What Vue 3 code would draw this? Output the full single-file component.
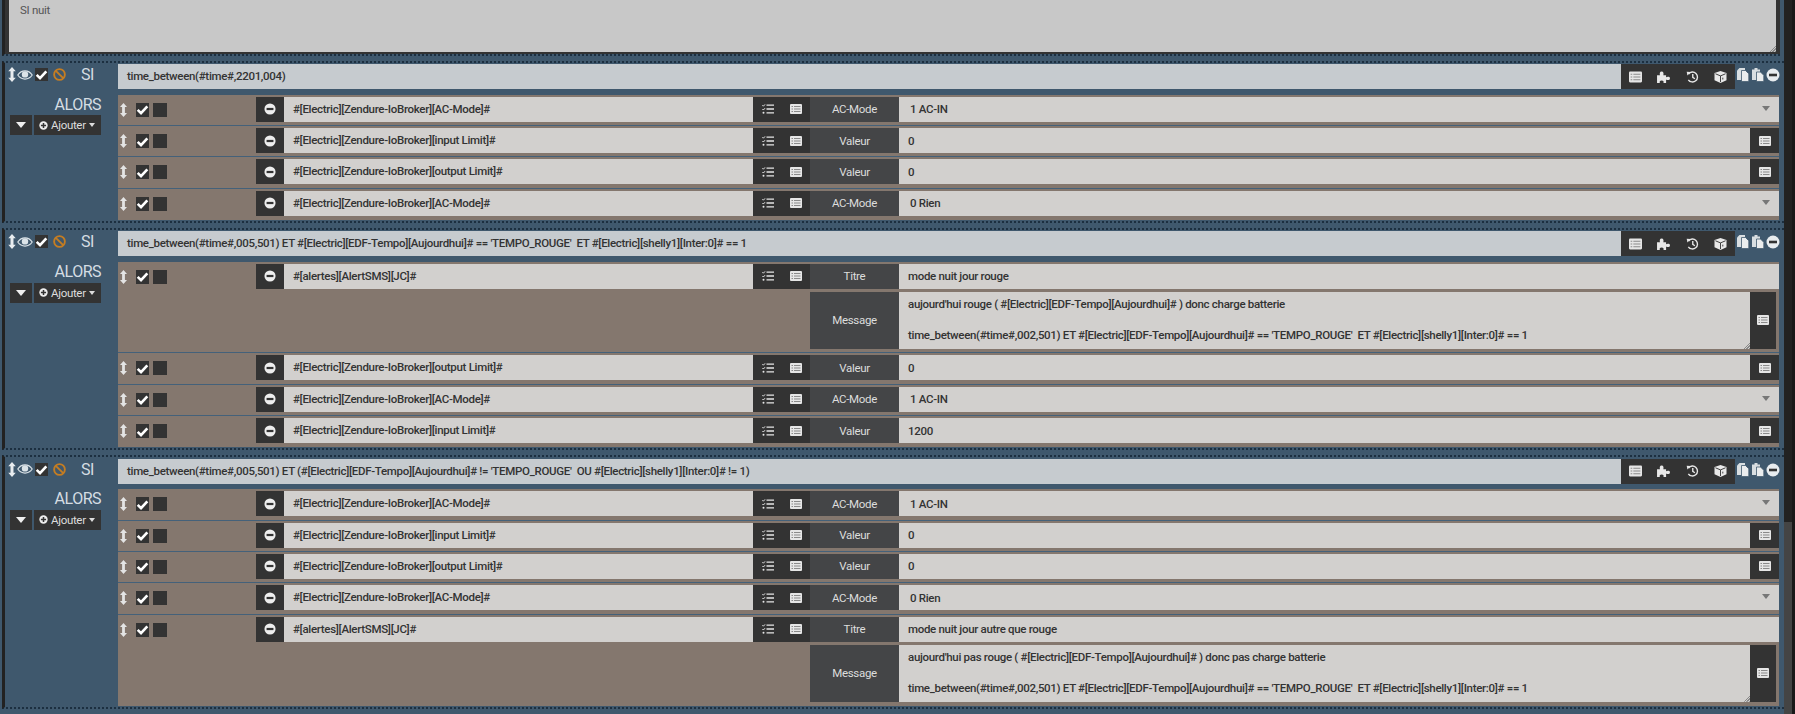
<script setup>
const L2 = "time_between(#time#,002,501) ET #[Electric][EDF-Tempo][Aujourdhui]# == 'TEMPO_ROUGE'  ET #[Electric][shelly1][Inter:0]# == 1"
const Z = '#[Electric][Zendure-IoBroker]'
const sel = (f, value) => ({ field: f, label: 'AC-Mode', value, kind: 'select' })
const val = (f, value) => ({ field: f, label: 'Valeur', value, kind: 'input' })
const sms = (value, first) => ({
  field: '#[alertes][AlertSMS][JC]#',
  label: 'Titre',
  value,
  kind: 'title',
  message: `${first}\n\n${L2}`
})
const blocks = [
  {
    cond: 'time_between(#time#,2201,004)',
    rows: [
      sel(Z + '[AC-Mode]#', '1 AC-IN'),
      val(Z + '[input Limit]#', '0'),
      val(Z + '[output Limit]#', '0'),
      sel(Z + '[AC-Mode]#', '0 Rien')
    ]
  },
  {
    cond: "time_between(#time#,005,501) ET #[Electric][EDF-Tempo][Aujourdhui]# == 'TEMPO_ROUGE'  ET #[Electric][shelly1][Inter:0]# == 1",
    rows: [
      sms('mode nuit jour rouge', "aujourd'hui rouge ( #[Electric][EDF-Tempo][Aujourdhui]# ) donc charge batterie"),
      val(Z + '[output Limit]#', '0'),
      sel(Z + '[AC-Mode]#', '1 AC-IN'),
      val(Z + '[input Limit]#', '1200')
    ]
  },
  {
    cond: "time_between(#time#,005,501) ET (#[Electric][EDF-Tempo][Aujourdhui]# != 'TEMPO_ROUGE'  OU #[Electric][shelly1][Inter:0]# != 1)",
    rows: [
      sel(Z + '[AC-Mode]#', '1 AC-IN'),
      val(Z + '[input Limit]#', '0'),
      val(Z + '[output Limit]#', '0'),
      sel(Z + '[AC-Mode]#', '0 Rien'),
      sms('mode nuit jour autre que rouge', "aujourd'hui pas rouge ( #[Electric][EDF-Tempo][Aujourdhui]# ) donc pas charge batterie")
    ]
  }
]
const addons = ['i-list', 'i-puzzle', 'i-history', 'i-cube']
</script>

<template>
  <div class="page">
    <svg class="defs" aria-hidden="true">
      <symbol id="i-arrows" viewBox="0 0 8 16"><path fill="currentColor" d="M4 0 8 4.500H5.600v7H8L4 16 0 11.500h2.400v-7H0Z" /></symbol>
      <symbol id="i-check" viewBox="0 0 14 14"><path fill="none" stroke="currentColor" stroke-width="2.800" d="M1.800 7.400 5.400 11 12.200 3.600" /></symbol>
      <symbol id="i-eye" viewBox="0 0 16 12"><path fill="none" stroke="currentColor" stroke-width="1.200" d="M.8 6C4.500.6 11.500.6 15.200 6 11.500 11.400 4.500 11.400.8 6Z" /><circle cx="8" cy="5.400" r="3.200" fill="currentColor" /></symbol>
      <symbol id="i-ban" viewBox="0 0 14 14"><circle cx="7" cy="7" r="5.800" fill="none" stroke="currentColor" stroke-width="2" /><path stroke="currentColor" stroke-width="2" d="M3 3l8 8" /></symbol>
      <symbol id="i-minus" viewBox="0 0 14 14"><circle cx="7" cy="7" r="6.500" fill="currentColor" /><rect x="3" y="5.700" width="8" height="2.600" fill="#333" /></symbol>
      <symbol id="i-plus" viewBox="0 0 14 14"><circle cx="7" cy="7" r="6.500" fill="currentColor" /><path stroke="#333" stroke-width="2.400" d="M3 7h8M7 3v8" /></symbol>
      <symbol id="i-list" viewBox="0 0 12 10"><rect width="12" height="10" rx="1" fill="#e6e6e6" /><path stroke="#8a8a8a" d="M1.500 2.500h1.500M4 2.500h6.500M1.500 5h1.500M4 5h6.500M1.500 7.500h1.500M4 7.500h6.500" /></symbol>
      <symbol id="i-tasks" viewBox="0 0 12 10"><path stroke="currentColor" stroke-width="1.300" d="M4.500 1.200H12M4.500 5H12M4.500 8.800H12" /><path fill="none" stroke="currentColor" d="M.4 1.200l1 1L3 .4M.4 5l1 1L3 4.200" /><circle cx="1.500" cy="8.800" r="1" fill="currentColor" /></symbol>
      <symbol id="i-puzzle" viewBox="0 0 14 13"><path fill="currentColor" d="M0 4.500h3.200C2.600 3 3 .6 5 .6S7.400 3 6.800 4.500H9.800v2.400c1.200-.9 4.200-.9 4.200 1.100s-3 2-4.200 1.100V13H6.900c.6-1 .2-2.600-1.900-2.600S2.500 12 3.100 13H0Z" /></symbol>
      <symbol id="i-history" viewBox="0 0 13 13"><path fill="none" stroke="currentColor" stroke-width="1.500" d="M2.200 3.200A5.400 5.400 0 1 1 2 9.500" /><path fill="currentColor" d="M.2.800 4.700 1 1 5Z" /><path fill="none" stroke="currentColor" stroke-width="1.500" d="M6.800 3.200V7l2.300 1.400" /></symbol>
      <symbol id="i-cube" viewBox="0 0 13 13"><path fill="currentColor" d="M6.500 0 13 2.300v7.800L6.500 13 0 10.100V2.300Z" /><path fill="none" stroke="#333" stroke-width="1" d="M1 3 6.500 5.300 12 3M6.500 5.300V12M9 7.200v2" /></symbol>
      <symbol id="i-copy" viewBox="0 0 12 14"><path fill="#d9dee1" d="M2.500 0H8v12H0V2.500Z" /><path fill="#ebedee" stroke="#3f586d" stroke-width=".8" d="M4.500 2.500h4L11.800 5.800V13.600H4.500Z" /></symbol>
      <symbol id="i-paste" viewBox="0 0 12 14"><path fill="#d9dee1" d="M0 1.500h2.500V0h3v1.500H8V12H0Z" /><path fill="#ebedee" stroke="#3f586d" stroke-width=".8" d="M4.500 4h4L11.800 7.300V13.600H4.500Z" /></symbol>
    </svg>

    <main class="content">
      <section class="note">
        <div class="note-area">SI nuit<span class="grip"></span></div>
      </section>

      <section v-for="(block, i) in blocks" :key="i" class="block">
        <header class="head">
          <div class="head-tools">
            <svg class="ico arrows"><use href="#i-arrows" /></svg>
            <svg class="ico eye"><use href="#i-eye" /></svg>
            <span class="box"><svg class="ico tick"><use href="#i-check" /></svg></span>
            <svg class="ico ban"><use href="#i-ban" /></svg>
            <span class="si">SI</span>
          </div>
          <div class="cond">{{ block.cond }}</div>
          <div class="addons">
            <span v-for="a in addons" :key="a" class="addon"><svg class="ico addon-ico"><use :href="'#' + a" /></svg></span>
          </div>
          <div class="copy-tools">
            <svg class="ico copy"><use href="#i-copy" /></svg>
            <svg class="ico copy"><use href="#i-paste" /></svg>
            <svg class="ico remove"><use href="#i-minus" /></svg>
          </div>
        </header>

        <div class="then">
          <div class="then-side">
            <div class="alors">ALORS</div>
            <div class="side-btns">
              <span class="btn btn-caret"><i class="caret caret-big"></i></span>
              <span class="btn btn-add">
                <svg class="ico plus"><use href="#i-plus" /></svg>Ajouter<i class="caret"></i>
              </span>
            </div>
          </div>

          <div class="actions">
            <div v-for="(row, j) in block.rows" :key="j" class="row" :class="{ tall: row.message }">
              <div class="line">
                <div class="row-tools">
                  <svg class="ico row-arrows"><use href="#i-arrows" /></svg>
                  <span class="box row-box"><svg class="ico tick"><use href="#i-check" /></svg></span>
                  <span class="box row-box blank"></span>
                </div>
                <span class="dark-btn minus-btn"><svg class="ico minus"><use href="#i-minus" /></svg></span>
                <div class="field">{{ row.field }}</div>
                <span class="dark-btn icon-pair">
                  <svg class="ico small"><use href="#i-tasks" /></svg>
                  <svg class="ico small"><use href="#i-list" /></svg>
                </span>
                <div class="label">{{ row.label }}</div>
                <div class="value" :class="row.kind">
                  <span>{{ row.value }}</span>
                  <i v-if="row.kind === 'select'" class="select-caret"></i>
                </div>
                <span v-if="row.kind === 'input'" class="dark-btn end-btn"><svg class="ico small"><use href="#i-list" /></svg></span>
              </div>
              <div v-if="row.message" class="message">
                <div class="label">Message</div>
                <div class="msg-text">{{ row.message }}<span class="grip"></span></div>
                <span class="dark-btn end-btn msg-btn"><svg class="ico small"><use href="#i-list" /></svg></span>
              </div>
            </div>
          </div>
        </div>
      </section>
    </main>

    <aside class="scroll">
      <div class="track"></div>
      <div class="thumb"></div>
    </aside>
  </div>
</template>

<style>
html, body { margin: 0; background: #1e1e1e; overflow: hidden; }
</style>

<style scoped>
.page {
  display: flex;
  width: 1795px;
  height: 714px;
  overflow: hidden;
  background: #1a1a1a;
  font-family: Roboto, "Liberation Sans", sans-serif;
  font-size: 11.5px;
  letter-spacing: -0.31px;
  color: #333;
}
.defs { position: absolute; width: 0; height: 0; }
.ico { display: block; flex: none; }

.content {
  width: 1784px;
  flex: none;
  background: #3f586d;
  overflow: hidden;
}
.scroll {
  flex: 1;
  display: flex;
  flex-direction: column;
  border-right: 3px solid #191919;
}
.track { height: 522px; background: #222; }
.thumb { flex: 1; background: #444; }

.note {
  margin: 0 4px 4.5px 2px;
  border-left: 3px solid #222;
  border-bottom: 2px dotted #1c2f40;
}
.note-area {
  position: relative;
  height: 34px;
  padding: 3px 11px 15px;
  line-height: 15px;
  background: #c8c8c8;
  border-left: 4px solid #333;
  border-right: 4px solid #333;
  border-bottom: 2px solid #333;
  color: #555;
}
.grip {
  position: absolute;
  right: 0;
  bottom: 0;
  width: 7px;
  height: 7px;
  background: repeating-linear-gradient(135deg, transparent 0 1px, #888 1px 2px);
  clip-path: polygon(100% 0, 100% 100%, 0 100%);
}

.block {
  margin: 0 0 4.9px 2px;
  padding: 1.6px 0 0.6px;
  border-left: 3px solid #222;
  border-top: 2px dotted #1c2f40;
  border-bottom: 2px dotted #1c2f40;
}
.block:last-child { margin-bottom: 0; }

.head { display: flex; align-items: flex-start; height: 30.6px; }
.head-tools {
  width: 113px;
  flex: none;
  height: 25px;
  display: flex;
  align-items: center;
  padding-bottom: 4px;
  box-sizing: border-box;
}
.arrows { width: 8px; height: 15px; margin-left: 3px; color: #e8ecef; }
.eye { width: 16px; height: 12px; margin-left: 1px; color: #dbe3e8; }
.box {
  display: flex;
  align-items: center;
  justify-content: center;
  width: 13px;
  height: 13px;
  margin-left: 2px;
  background: #333;
}
.tick { width: 13px; height: 13px; color: #fff; }
.ban { width: 13px; height: 13px; margin-left: 5px; color: #c57d22; }
.si { margin-left: 15px; font-size: 16px; letter-spacing: -0.5px; color: #d5dde3; }

.cond {
  width: 1503px;
  flex: none;
  height: 25px;
  box-sizing: border-box;
  padding-left: 9px;
  line-height: 25px;
  background: #c6cbcf;
  font-weight: 500;
  white-space: pre;
}
.addons { display: flex; width: 114px; height: 25px; flex: none; background: #333; }
.addon { flex: 1; display: flex; align-items: center; justify-content: center; }
.addon-ico { width: 13px; height: 12px; color: #e8e8e8; }
.copy-tools { display: flex; align-items: center; height: 25px; padding-bottom: 3px; box-sizing: border-box; margin-left: 2px; }
.copy { width: 12px; height: 14px; margin-right: 3px; }
.copy + .copy { margin-right: 2px; }
.remove { width: 14px; height: 14px; color: #e8ecef; }

.then { display: flex; align-items: flex-start; }
.then-side { width: 113px; flex: none; }
.alors {
  height: 20.6px;
  line-height: 20px;
  padding-right: 17px;
  text-align: right;
  font-size: 16px;
  letter-spacing: -0.5px;
  color: #d5dde3;
}
.side-btns { display: flex; gap: 2px; padding-left: 5px; }
.btn {
  display: flex;
  align-items: center;
  height: 20px;
  background: #333;
  color: #ddd;
}
.btn-caret { width: 22px; justify-content: center; }
.btn-add { width: 67px; padding-left: 5px; box-sizing: border-box; }
.plus { width: 9px; height: 9px; margin-right: 3px; color: #eee; }
.caret {
  display: block;
  margin-left: 3px;
  width: 0;
  height: 0;
  border-left: 3.5px solid transparent;
  border-right: 3.5px solid transparent;
  border-top: 4px solid #ddd;
}
.caret-big {
  margin: 0;
  border-left-width: 5.5px;
  border-right-width: 5.5px;
  border-top: 6px solid #f0f0f0;
}

.actions { width: 1661px; flex: none; background: #84776e; }
.row {
  height: 31.4px;
  box-sizing: border-box;
  padding-top: 2px;
  border-bottom: 1px solid #44617a;
}
.row:last-child { border-bottom: 0; }
.row.tall { height: 91.4px; }
.line { display: flex; height: 25px; }
.row-tools { width: 138px; flex: none; display: flex; align-items: flex-start; padding-top: 6px; box-sizing: border-box; }
.row-arrows { width: 7px; height: 14px; margin-left: 2px; color: #e4e4e4; }
.row-box { margin-left: 0; width: 13px; height: 14px; margin-right: 4px; }
.row-arrows + .row-box { margin-left: 9px; }
.blank { width: 14px; margin-right: 0; }

.dark-btn {
  display: flex;
  align-items: center;
  justify-content: center;
  background: #333;
  flex: none;
}
.minus-btn { width: 28px; }
.minus { width: 12px; height: 12px; color: #eee; }
.field {
  width: 469px;
  flex: none;
  box-sizing: border-box;
  padding-left: 9px;
  line-height: 25px;
  background: #d2d0ce;
  font-weight: 500;
}
.icon-pair { width: 57px; gap: 16px; }
.small { width: 12px; height: 10px; color: #e6e6e6; }
.label {
  width: 89px;
  flex: none;
  display: flex;
  align-items: center;
  justify-content: center;
  background: #444547;
  color: #ddd;
}
.value {
  flex: 1;
  display: flex;
  align-items: center;
  justify-content: space-between;
  padding: 0 9px;
  background: #d2d0ce;
  font-weight: 500;
}
.value.select { padding-left: 11px; }
.select-caret {
  width: 0;
  height: 0;
  margin-bottom: 2px;
  border-left: 4.5px solid transparent;
  border-right: 4.5px solid transparent;
  border-top: 5px solid #777;
}
.end-btn { width: 29px; }

.message {
  display: flex;
  height: 57px;
  margin: 3px 3px 0 692px;
}
.msg-text {
  position: relative;
  width: 851px;
  flex: none;
  box-sizing: border-box;
  padding: 5px 9px 0;
  line-height: 15.6px;
  background: #d2d0ce;
  font-weight: 500;
  white-space: pre-wrap;
}
.msg-btn { width: 26px; }
</style>
